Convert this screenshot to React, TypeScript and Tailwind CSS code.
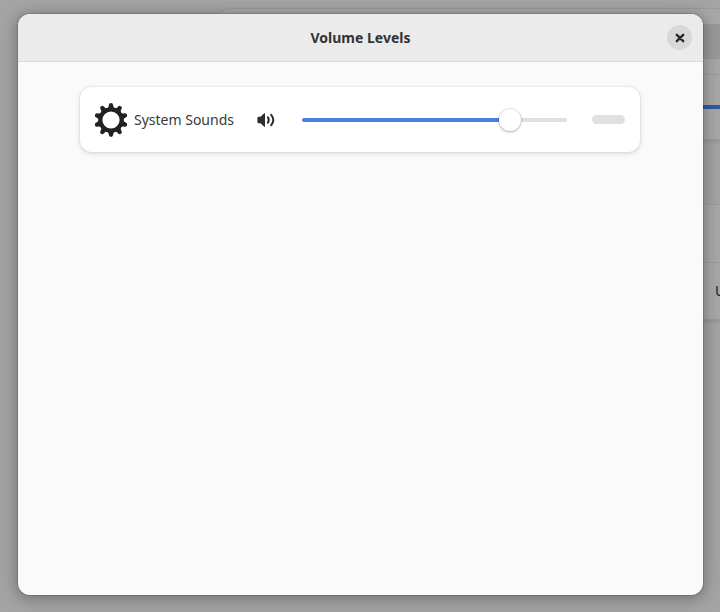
import { useState } from "react";

function GearIcon() {
  const angles = [0, 36, 72, 108, 144, 180, 216, 252, 288, 324];
  return (
    <svg viewBox="-17 -17 34 34" className="size-[34px] shrink-0" fill="#222222" aria-hidden="true">
      <circle r="10.7" fill="none" stroke="#222222" strokeWidth="4.2" />
      {angles.map((a) => (
        <path
          key={a}
          transform={`rotate(${a})`}
          d="M-3.8-11.6 C-2.6-12.4-2.3-13.4-2.2-14.8 Q-2-16.9 0-16.9 Q2-16.9 2.2-14.8 C2.3-13.4 2.6-12.4 3.8-11.6 Z"
        />
      ))}
    </svg>
  );
}

function SpeakerIcon() {
  return (
    <svg viewBox="0 0 18 16" className="h-4 w-[18px]" aria-hidden="true">
      <path d="M1.6 4.8 H3.6 L7.2 1.2 H8 V14.8 H7.2 L3.6 11.2 H1.6 Q0.4 11.2 0.4 10 V6 Q0.4 4.8 1.6 4.8 Z" fill="#2e2e2e" />
      <path d="M10.8 5.2 Q12.8 8 10.8 10.8" fill="none" stroke="#2e2e2e" strokeWidth="2" strokeLinecap="round" />
      <path d="M14.2 2.8 Q18.4 8 14.2 13.2" fill="none" stroke="#2e2e2e" strokeWidth="2" strokeLinecap="round" />
    </svg>
  );
}

// Dimmed settings window that sits behind the dialog
function BackgroundWindow() {
  return (
    <div className="absolute inset-0 overflow-hidden bg-[#a5a5a5] pt-[9px] pl-[218px]" aria-hidden="true">
      <div className="w-[640px] rounded-xl bg-[#a9a9a9] shadow-[0_0_0_1px_#9b9b9b,0_2px_4px_#00000022]">
        <div className="h-[66px] border-b border-[#9c9c9c] py-[15px] pl-4">
          <div className="h-[35px] rounded-md bg-[#9a9a9a]" />
        </div>
        <div className="flex h-16 items-center pl-4">
          <div className="h-1 w-full bg-[#315ca3]" />
        </div>
      </div>
      <div className="mt-[66px] w-[640px] rounded-xl bg-[#a9a9a9] shadow-[0_0_0_1px_#9b9b9b,0_2px_4px_#00000022]">
        <div className="h-[58px] border-b border-[#9c9c9c]" />
        <div className="flex h-14 items-center pl-[497px] text-sm text-[#202020]">U</div>
      </div>
    </div>
  );
}

export default function App() {
  const [volume, setVolume] = useState(81);
  const fill = `calc(11px + (100% - 22px) * ${volume / 100})`;

  return (
    <div className="relative flex min-h-screen font-['Noto_Sans',sans-serif]">
      <BackgroundWindow />
      <div
        role="dialog"
        aria-labelledby="dialog-title"
        className="relative mt-[14px] mr-[17px] mb-[17px] ml-[18px] flex flex-1 flex-col overflow-hidden rounded-xl bg-[#fafafa] shadow-[0_0_0_1px_#00000020,0_2px_12px_2px_#00000038,0_4px_30px_4px_#00000018]"
      >
        <header className="grid h-12 grid-cols-[1fr_auto_1fr] items-center border-b border-[#dadada] bg-[#ebebeb] px-[11px]">
          <h1 id="dialog-title" className="col-start-2 text-sm font-bold text-[#333333]">
            Volume Levels
          </h1>
          <button
            type="button"
            aria-label="Close"
            className="flex size-[25px] items-center justify-center justify-self-end rounded-full bg-[#d8d8d8]"
          >
            <svg viewBox="0 0 10 10" className="size-[10px]" aria-hidden="true">
              <path d="M1.8 1.8 L8.2 8.2 M8.2 1.8 L1.8 8.2" stroke="#2a2a2a" strokeWidth="2.4" strokeLinecap="round" />
            </svg>
          </button>
        </header>

        <main className="py-[25px] pr-[63px] pl-[62px]">
          <div className="flex h-[65px] items-center rounded-xl bg-white pr-[15px] pl-[14px] shadow-[0_0_0_1px_#00000008,0_1px_3px_1px_#00000012,0_2px_6px_2px_#00000008]">
            <GearIcon />
            <label htmlFor="system-volume" className="ml-[6px] w-[102px] text-sm whitespace-nowrap text-[#3a3a3a]">
              System Sounds
            </label>
            <button type="button" aria-label="Mute" className="ml-[21px]">
              <SpeakerIcon />
            </button>
            <input
              id="system-volume"
              type="range"
              min={0}
              max={100}
              value={volume}
              onChange={(e) => setVolume(Number(e.target.value))}
              style={{ backgroundImage: `linear-gradient(to right, #4a80db ${fill}, #e0e0e0 ${fill})` }}
              className="ml-[27px] h-1 min-w-0 flex-1 appearance-none rounded-full [&::-webkit-slider-thumb]:size-[22px] [&::-webkit-slider-thumb]:appearance-none [&::-webkit-slider-thumb]:rounded-full [&::-webkit-slider-thumb]:bg-white [&::-webkit-slider-thumb]:shadow-[0_0_0_1px_#00000014,0_1px_3px_#00000040]"
            />
            <div
              role="meter"
              aria-label="System Sounds level"
              aria-valuenow={0}
              className="ml-[25px] h-[9px] w-[33px] shrink-0 rounded-full bg-[#e0e0e0]"
            />
          </div>
        </main>
      </div>
    </div>
  );
}
